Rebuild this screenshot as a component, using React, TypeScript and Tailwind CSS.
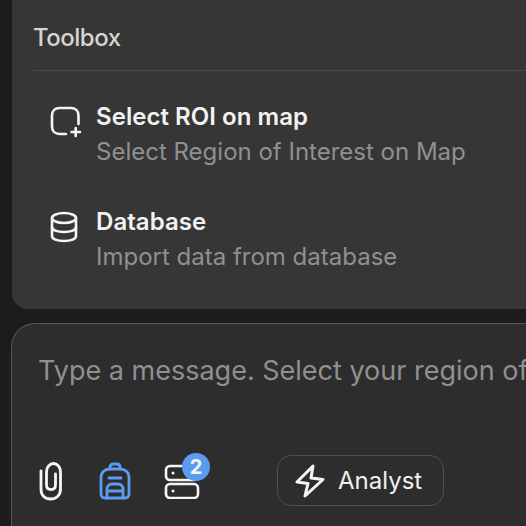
import React from "react";

const font = { fontFamily: "Inter, sans-serif" };

function Tool({ icon, title, sub }: { icon: React.ReactNode; title: string; sub: string }) {
  return (
    <div className="flex h-[70px] items-start">
      <div className="w-[63px] shrink-0 pl-[17px] pt-[3px]">{icon}</div>
      <div className="flex flex-col">
        <span className="text-[24px] leading-[30px] font-semibold tracking-[0.05px] text-[#f2f2f2] whitespace-nowrap">{title}</span>
        <span className="mt-[5px] text-[24px] leading-[30px] text-[#909090] whitespace-nowrap">{sub}</span>
      </div>
    </div>
  );
}

export default function App() {
  return (
    <div className="h-[526px] w-[526px] overflow-hidden bg-[#1c1c1c]" style={font}>
      <div className="ml-[12px] h-[309px] w-[514px] rounded-bl-[16px] bg-[#363636] pl-[21px]">
        <div className="flex h-[71px] items-center border-b border-[#4a4a47] pt-[5px] text-[24px] font-medium tracking-[-0.5px] text-[#d4d4d4]">Toolbox</div>
        <div className="pt-[31px]">
          <Tool
            title="Select ROI on map"
            sub="Select Region of Interest on Map"
            icon={
              <svg width="32" height="34" viewBox="0 0 32 34" fill="none" stroke="#f5f5f5" strokeWidth="2.6" strokeLinecap="round" strokeLinejoin="round">
                <path d="M16 29H9.500C5 29 2 26 2 21.500V10.500C2 6 5 3 9.500 3H21C25.500 3 28.500 6 28.500 10.500V19" />
                <path d="M21.500 27H30M25.700 23V31" />
              </svg>
            }
          />
          <div className="h-[35px]" />
          <Tool
            title="Database"
            sub="Import data from database"
            icon={
              <svg width="28" height="32" viewBox="0 0 28 32" fill="none" stroke="#f5f5f5" strokeWidth="2.6" strokeLinecap="round" strokeLinejoin="round" className="mt-[1px]">
                <ellipse cx="14" cy="7" rx="12" ry="5" />
                <path d="M2 7V25C2 28 7 30 14 30S26 28 26 25V7" />
                <path d="M2 16C2 19 7 21 14 21S26 19 26 16" />
              </svg>
            }
          />
        </div>
      </div>
      <div className="ml-[11px] mt-[14px] h-[260px] w-[515px] rounded-tl-[24px] border-l border-t border-[#57575a] bg-[#2d2d2e] pl-[26px]">
        <div className="pt-[30px] text-[27px] leading-[34px] text-[#909090] whitespace-nowrap">Type a message. Select your region of</div>
        <div className="mt-[67px] flex items-center">
          <svg width="26" height="40" viewBox="0 0 26 40" fill="none" stroke="#f5f5f5" strokeWidth="2.8" strokeLinecap="round" strokeLinejoin="round">
            <path d="M3 10V28C3 34.500 7 38 12.500 38S22.500 34.500 22.500 28V11C22.500 5.500 19 2.500 15.500 2.500S8.500 5.500 8.500 11V24C8.500 27 10 28.500 13 28.500S17.500 27 17.500 24V13" />
          </svg>
          <svg width="32" height="38" viewBox="0 0 32 38" fill="none" stroke="#5b9cf0" strokeWidth="2.8" strokeLinecap="round" strokeLinejoin="round" className="ml-[35px]">
            <path d="M11 7V5C11 3 12.500 2 14 2H18C19.500 2 21 3 21 5V7" />
            <path d="M2 16C2 10 6 7 11 7H21C26 7 30 10 30 16V32C30 34.500 28.500 36 26 36H6C3.500 36 2 34.500 2 32Z" />
            <path d="M10 16H22" />
            <path d="M8 36V27C8 24 10 22 13 22H19C22 22 24 24 24 27V36" />
            <path d="M8 29H24" />
          </svg>
          <div className="relative ml-[33px] h-[36px] w-[36px]">
            <svg width="36" height="36" viewBox="0 0 36 36" fill="none" stroke="#f5f5f5" strokeWidth="2.6" strokeLinecap="round" strokeLinejoin="round">
              <rect x="2" y="3" width="32" height="14" rx="4" />
              <rect x="2" y="21" width="32" height="14" rx="4" />
              <circle cx="9" cy="10" r="1.500" fill="#f5f5f5" stroke="none" />
              <circle cx="9" cy="28" r="1.500" fill="#f5f5f5" stroke="none" />
            </svg>
            <span className="absolute -top-[10px] left-[18px] flex h-[28px] w-[28px] items-center justify-center rounded-full bg-[#5b9cf0] text-[20px] font-bold text-[#f5f5f5]">2</span>
          </div>
          <div className="ml-[77px] flex h-[51px] w-[167px] items-center rounded-[14px] border border-[#505052] pl-[17px] text-[#f0f0f0]">
            <svg width="30" height="34" viewBox="0 0 30 34" fill="none" stroke="#f5f5f5" strokeWidth="3" strokeLinecap="round" strokeLinejoin="round">
              <path d="M18 2L2 18L13 19.500L10 32L28 15.500L16 14Z" />
            </svg>
            <span className="ml-[13px] text-[24px] font-normal">Analyst</span>
          </div>
        </div>
      </div>
    </div>
  );
}
